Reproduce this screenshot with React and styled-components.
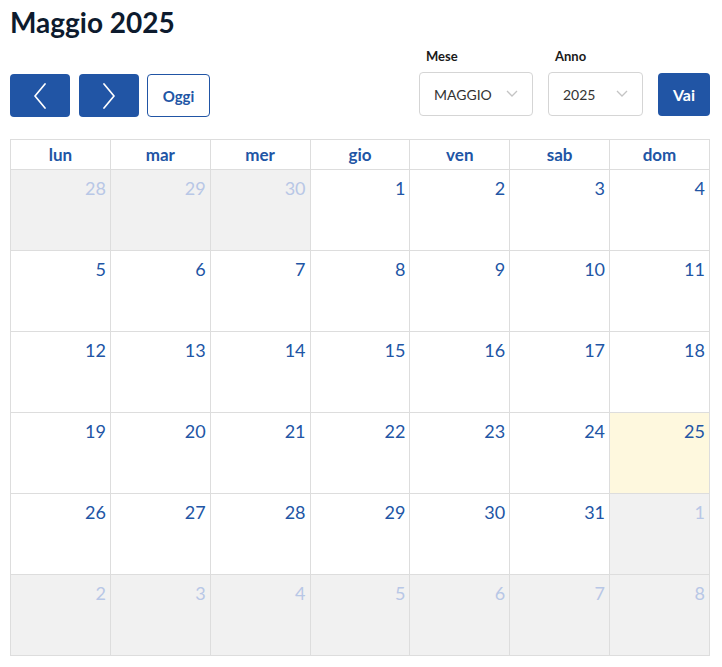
import React from 'react';
import styled, { createGlobalStyle } from 'styled-components';

const BLUE = '#2155a5';

const GlobalStyle = createGlobalStyle`
  body {
    margin: 0;
    background: #fff;
    font-family: 'Lato', 'Open Sans', sans-serif;
  }
`;

const Page = styled.div`
  padding: 6px 12px 0 10px;
`;

const Title = styled.h1`
  margin: 0;
  font-size: 28px;
  line-height: 32px;
  font-weight: 700;
  color: #0d1b2e;
`;

const Toolbar = styled.div`
  display: flex;
  justify-content: space-between;
  align-items: flex-end;
  margin-top: 10px;
`;

const NavGroup = styled.div`
  display: flex;
  gap: 9px;
  align-items: center;
`;

const NavButton = styled.button`
  width: 60px;
  height: 43px;
  border: none;
  border-radius: 4px;
  background: ${BLUE};
  display: flex;
  align-items: center;
  justify-content: center;
  padding: 0;
  cursor: pointer;
`;

const OutlineButton = styled.button`
  height: 43px;
  width: 63px;
  margin-left: -1px;
  border: 1px solid ${BLUE};
  border-radius: 4px;
  background: #fff;
  color: ${BLUE};
  font-family: inherit;
  font-size: 15px;
  font-weight: 700;
  cursor: pointer;
`;

const Form = styled.div`
  display: flex;
  align-items: flex-end;
  gap: 15px;
  margin-bottom: 1px;
`;

const Field = styled.label`
  display: flex;
  flex-direction: column;
  gap: 8px;
`;

const FieldLabel = styled.span`
  font-size: 13px;
  font-weight: 700;
  color: #1a1a1a;
  padding-left: 7px;
`;

const Select = styled.div`
  box-sizing: border-box;
  width: ${p => p.$w}px;
  height: 44px;
  border: 1px solid #d5d5d5;
  border-radius: 4px;
  display: flex;
  align-items: center;
  justify-content: space-between;
  padding: 0 14px 0 14px;
  font-size: 14px;
  color: #333;
  background: #fff;
`;

const SubmitButton = styled.button`
  width: 52px;
  height: 43px;
  border: none;
  border-radius: 4px;
  background: ${BLUE};
  color: #fff;
  font-family: inherit;
  font-size: 16px;
  font-weight: 700;
`;

const Calendar = styled.table`
  margin-top: 22px;
  width: 700px;
  border-collapse: collapse;
  table-layout: fixed;
`;

const HeadCell = styled.th`
  height: 29px;
  border: 1px solid #ddd;
  color: ${BLUE};
  font-size: 17px;
  font-weight: 700;
  padding: 0;
  text-align: center;
`;

const DayCell = styled.td`
  height: 73px;
  border: 1px solid #ddd;
  vertical-align: top;
  text-align: right;
  padding: 7px 4px 0 0;
  font-size: 18px;
  line-height: 22px;
  color: ${p => (p.$muted ? '#b8c7e6' : BLUE)};
  background: ${p => (p.$today ? '#fef8de' : p.$muted ? '#f1f1f1' : '#fff')};
`;

const Chevron = ({ dir }) => (
  <svg width="14" height="26" viewBox="0 0 14 26" fill="none">
    <polyline
      points={dir === 'left' ? '12,1 2,13 12,25' : '2,1 12,13 2,25'}
      stroke="#fff"
      strokeWidth="1.7"
      strokeLinecap="round"
      strokeLinejoin="round"
    />
  </svg>
);

const Caret = () => (
  <svg width="12" height="8" viewBox="0 0 12 8" fill="none">
    <polyline points="1,1 6,6 11,1" stroke="#c4c4c4" strokeWidth="1.3" />
  </svg>
);

const days = ['lun', 'mar', 'mer', 'gio', 'ven', 'sab', 'dom'];

const buildWeeks = () => {
  const cells = [];
  [28, 29, 30].forEach(d => cells.push({ d, muted: true }));
  for (let d = 1; d <= 31; d++) cells.push({ d, today: d === 25 });
  for (let d = 1; d <= 8; d++) cells.push({ d, muted: true });
  const weeks = [];
  for (let i = 0; i < cells.length; i += 7) weeks.push(cells.slice(i, i + 7));
  return weeks;
};

export default function App() {
  const weeks = buildWeeks();
  return (
    <Page>
      <GlobalStyle />
      <Title>Maggio 2025</Title>
      <Toolbar>
        <NavGroup>
          <NavButton aria-label="Mese precedente"><Chevron dir="left" /></NavButton>
          <NavButton aria-label="Mese successivo"><Chevron dir="right" /></NavButton>
          <OutlineButton>Oggi</OutlineButton>
        </NavGroup>
        <Form>
          <Field>
            <FieldLabel>Mese</FieldLabel>
            <Select $w={114}>MAGGIO <Caret /></Select>
          </Field>
          <Field>
            <FieldLabel>Anno</FieldLabel>
            <Select $w={95}>2025 <Caret /></Select>
          </Field>
          <SubmitButton>Vai</SubmitButton>
        </Form>
      </Toolbar>
      <Calendar>
        <thead>
          <tr>
            {days.map(d => <HeadCell key={d}>{d}</HeadCell>)}
          </tr>
        </thead>
        <tbody>
          {weeks.map((w, i) => (
            <tr key={i}>
              {w.map((c, j) => (
                <DayCell key={j} $muted={c.muted} $today={c.today}>{c.d}</DayCell>
              ))}
            </tr>
          ))}
        </tbody>
      </Calendar>
    </Page>
  );
}
